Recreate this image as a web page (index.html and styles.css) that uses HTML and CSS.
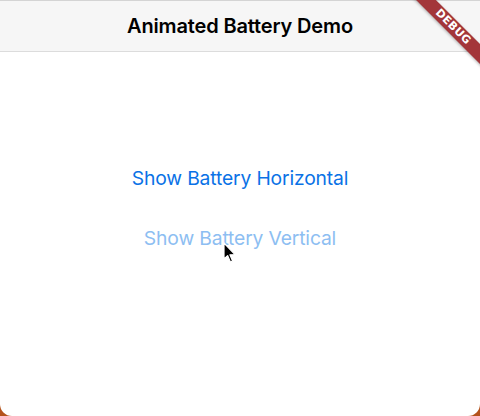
FILE: index.html
```html
<!DOCTYPE html>
<html lang="en">
<head>
<meta charset="utf-8">
<title>Animated Battery Demo</title>
<link rel="stylesheet" href="styles.css">
</head>
<body>
<div class="app">
  <header class="nav">
    <h1 class="nav-title">Animated Battery Demo</h1>
  </header>
  <main class="content">
    <button class="link-btn">Show Battery Horizontal</button>
    <button class="link-btn link-btn-pressed">Show Battery Vertical</button>
  </main>
  <div class="debug-banner">DEBUG</div>
  <svg class="cursor" width="14" height="22" viewBox="0 0 14 22" aria-hidden="true">
    <path d="M1 1 L1 17 L4.6 13.6 L7.4 20 L9.6 19 L6.9 12.8 L12 12.6 Z" fill="#000" stroke="#fff" stroke-width="1.2" stroke-linejoin="round"/>
  </svg>
</div>
</body>
</html>
```
FILE: styles.css
```css
html, body {
  margin: 0;
  padding: 0;
}
body {
  background: #b4521c;
  width: 480px;
  height: 416px;
  overflow: hidden;
}
.app {
  position: relative;
  width: 480px;
  height: 416px;
  background: #ffffff;
  border-radius: 0 0 12px 12px;
  overflow: hidden;
  font-family: Inter, "Noto Sans", sans-serif;
}
.nav {
  height: 50px;
  background: #f6f6f6;
  border-top: 1px solid #d4d4d4;
  border-bottom: 1px solid #dcdcdc;
  display: flex;
  align-items: center;
  justify-content: center;
}
.nav-title {
  margin: 0;
  font-size: 20px;
  font-weight: 600;
  color: #000;
  letter-spacing: -0.15px;
}
.content {
  display: flex;
  flex-direction: column;
  align-items: center;
  padding-top: 96px;
}
.link-btn {
  background: none;
  border: 0;
  padding: 0;
  height: 60px;
  line-height: 60px;
  font-family: Inter, "Noto Sans", sans-serif;
  font-size: 19.3px;
  font-weight: 400;
  color: #0a72e6;
  letter-spacing: -0.15px;
}
.link-btn-pressed {
  color: #8dbef2;
}
.debug-banner {
  position: absolute;
  left: 393px;
  top: 20px;
  width: 120px;
  height: 14px;
  line-height: 14px;
  transform: rotate(45deg);
  background: #a3363a;
  color: #fff;
  font-family: "DejaVu Sans", sans-serif;
  font-weight: 700;
  font-size: 11px;
  text-align: center;
  letter-spacing: 0.4px;
  box-shadow: 0 1px 3px rgba(0,0,0,0.3);
}
.cursor {
  position: absolute;
  left: 223px;
  top: 242px;
}
```
